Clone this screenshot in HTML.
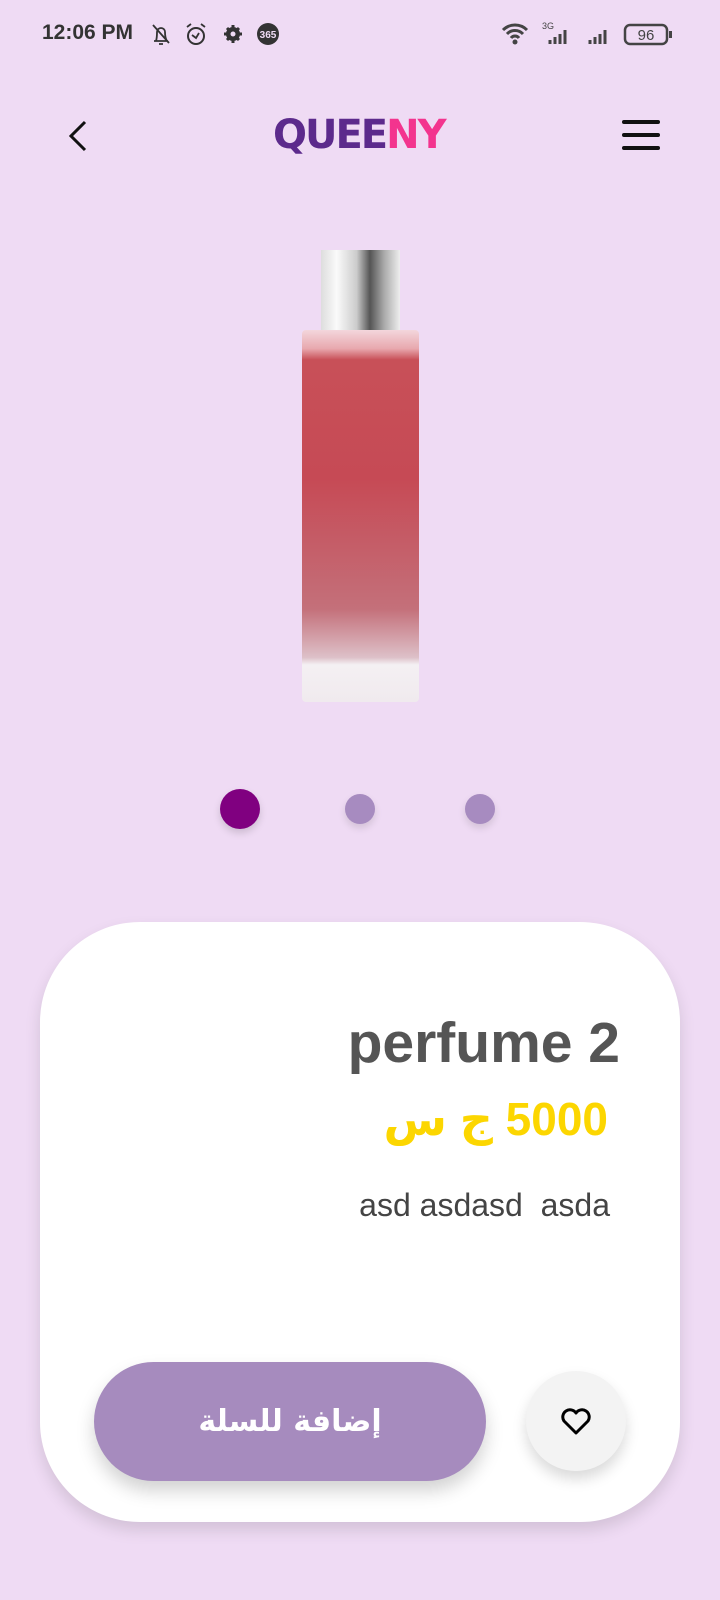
<!DOCTYPE html>
<html><head><meta charset="utf-8"><style>
*{margin:0;padding:0;box-sizing:border-box}
body{width:720px;height:1600px;background:#EFDBF4;position:relative;overflow:hidden;font-family:"Liberation Sans","Noto Sans CJK SC",sans-serif}
.abs{position:absolute}
</style></head><body>
<div class="abs" style="left:42px;top:21px;font-size:21px;font-weight:bold;color:#333">12:06 PM</div>
<svg class="abs" style="left:150px;top:22px" width="135" height="26" viewBox="0 0 135 26">
<path d="M4 19h14M6 19c1-3 1-6 1-9a4 4 0 018 0c0 3 0 6 2 9M9 22h4M3 3l16 18" stroke="#333" stroke-width="1.8" fill="none"/>
<circle cx="46" cy="14" r="8" stroke="#333" stroke-width="2" fill="none"/><path d="M42 13l4 3 3-5M37 5l4-3M55 5l-4-3" stroke="#333" stroke-width="1.8" fill="none"/>
<circle cx="83" cy="12" r="7" fill="#333"/><circle cx="83" cy="12" r="2.5" fill="#EFDBF4"/>
<path d="M83 3v4M83 17v4M74 12h4M88 12h4M77 6l3 3M86 15l3 3M89 6l-3 3M80 15l-3 3" stroke="#333" stroke-width="3"/>
<circle cx="118" cy="12" r="11" fill="#333"/><text x="118" y="16" font-size="10" fill="#EFDBF4" text-anchor="middle" font-weight="bold">365</text>
</svg>
<svg class="abs" style="left:500px;top:20px" width="190" height="28" viewBox="0 0 190 28">
<path d="M3 10a17 17 0 0124 0M7 14a11 11 0 0116 0M11 18a5 5 0 018 0" stroke="#444" stroke-width="3" fill="none"/><circle cx="15" cy="22" r="2.5" fill="#444"/>
<text x="42" y="9" font-size="9" fill="#444">3G</text>
<path d="M50 24v-4M55 24v-7M60 24v-10M65 24v-14" stroke="#444" stroke-width="3"/>
<path d="M90 24v-4M95 24v-7M100 24v-10M105 24v-14" stroke="#444" stroke-width="3"/>
<rect x="125" y="5" width="42" height="19" rx="5" stroke="#444" stroke-width="2.5" fill="none"/><rect x="169" y="11" width="3" height="7" fill="#444"/>
<text x="146" y="20" font-size="15" fill="#444" text-anchor="middle">96</text>
</svg>
<svg class="abs" style="left:66px;top:120px" width="24" height="32" viewBox="0 0 24 32"><path d="M19 2L5 16l14 14" stroke="#111" stroke-width="3" fill="none"/></svg>
<div class="abs" style="left:273px;top:112px;font-size:40px;font-weight:900;letter-spacing:-2px;color:#5C2A8C;font-family:'DejaVu Sans',sans-serif">QUEE<span style="color:#F3348E">NY</span></div>
<div class="abs" style="left:622px;top:120px;width:38px;height:4px;background:#111;border-radius:2px"></div>
<div class="abs" style="left:622px;top:133px;width:38px;height:4px;background:#111;border-radius:2px"></div>
<div class="abs" style="left:622px;top:146px;width:38px;height:4px;background:#111;border-radius:2px"></div>
<div class="abs" style="left:321px;top:250px;width:79px;height:84px;background:linear-gradient(90deg,#ddd,#fafafa 20%,#ccc 45%,#555 62%,#aaa 80%,#eee);"></div>
<div class="abs" style="left:302px;top:330px;width:117px;height:372px;border-radius:4px;background:linear-gradient(180deg,#f3d6dc 0,#e8a8ae 5%,#c85058 8%,#c64a55 40%,#c4707a 75%,#ddc0c8 88%,#f4f0f3 90%,#f0eaee 100%)"></div>
<div class="abs" style="left:220px;top:789px;width:40px;height:40px;border-radius:50%;background:#800080;box-shadow:0 4px 8px rgba(0,0,0,.15)"></div>
<div class="abs" style="left:345px;top:794px;width:30px;height:30px;border-radius:50%;background:#A78BC0;box-shadow:0 4px 8px rgba(0,0,0,.12)"></div>
<div class="abs" style="left:465px;top:794px;width:30px;height:30px;border-radius:50%;background:#A78BC0;box-shadow:0 4px 8px rgba(0,0,0,.12)"></div>
<div class="abs" style="left:40px;top:922px;width:640px;height:600px;background:#fff;border-radius:100px;box-shadow:0 8px 16px rgba(0,0,0,.12)"></div>
<div class="abs" style="right:100px;top:1010px;font-size:57px;font-weight:bold;color:#555">perfume 2</div>
<div class="abs" style="right:112px;top:1092px;font-size:46px;font-weight:bold;color:#FCD600;direction:rtl;font-family:'Liberation Sans','DejaVu Sans',sans-serif">5000 ج س</div>
<div class="abs" style="right:110px;top:1187px;font-size:32px;color:#444;white-space:pre">asd asdasd  asda</div>
<div class="abs" style="left:94px;top:1362px;width:392px;height:119px;border-radius:60px;background:#A68BBE;box-shadow:0 10px 18px rgba(0,0,0,.18);color:#fff;font-size:30px;font-weight:bold;display:flex;align-items:center;justify-content:center;font-family:'DejaVu Sans',sans-serif">إضافة للسلة</div>
<div class="abs" style="left:526px;top:1371px;width:100px;height:100px;border-radius:50%;background:#f3f3f3;box-shadow:0 8px 14px rgba(0,0,0,.15)"></div>
<svg class="abs" style="left:560px;top:1408px" width="32" height="28" viewBox="0 0 32 28"><path d="M16 25L4 13a6.5 6.5 0 0112-8 6.5 6.5 0 0112 8z" stroke="#000" stroke-width="3" fill="none" stroke-linejoin="round"/></svg>
</body></html>
